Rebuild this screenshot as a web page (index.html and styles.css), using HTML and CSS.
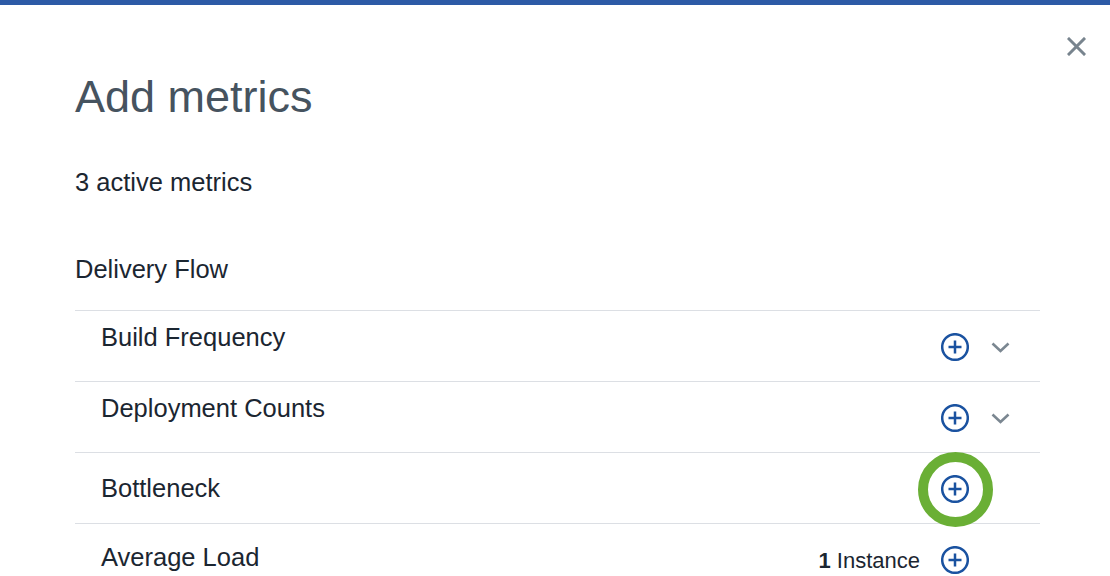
FILE: index.html
```html
<!DOCTYPE html>
<html lang="en">
<head>
<meta charset="utf-8">
<title>Add metrics</title>
<link rel="stylesheet" href="styles.css">
</head>
<body>
<div class="topbar"></div>
<div class="dialog">
  <div class="dialog-head">
    <button class="close" aria-label="Close">
      <svg width="19" height="19" viewBox="0 0 19 19"><path d="M2 2 L17 17 M17 2 L2 17" stroke="#78848e" stroke-width="3" stroke-linecap="square" fill="none"/></svg>
    </button>
  </div>
  <h1 class="title">Add metrics</h1>
  <p class="active">3 active metrics</p>
  <h2 class="group">Delivery Flow</h2>
  <ul class="metrics">
    <li class="metric">
      <span class="metric-name">Build Frequency</span>
      <div class="actions">
        <span class="add"><svg width="28" height="28" viewBox="0 0 28 28"><circle cx="14" cy="14" r="12.8" fill="none" stroke="#1a52a0" stroke-width="2.5"/><path d="M14 7.5 V20.5 M7.5 14 H20.5" stroke="#1a52a0" stroke-width="2.5" fill="none"/></svg></span>
        <span class="chev"><svg width="19" height="11" viewBox="0 0 19 11"><path d="M1.5 1.5 L9.5 9 L17.5 1.5" stroke="#7b8791" stroke-width="2.6" fill="none"/></svg></span>
      </div>
    </li>
    <li class="metric">
      <span class="metric-name">Deployment Counts</span>
      <div class="actions">
        <span class="add"><svg width="28" height="28" viewBox="0 0 28 28"><circle cx="14" cy="14" r="12.8" fill="none" stroke="#1a52a0" stroke-width="2.5"/><path d="M14 7.5 V20.5 M7.5 14 H20.5" stroke="#1a52a0" stroke-width="2.5" fill="none"/></svg></span>
        <span class="chev"><svg width="19" height="11" viewBox="0 0 19 11"><path d="M1.5 1.5 L9.5 9 L17.5 1.5" stroke="#7b8791" stroke-width="2.6" fill="none"/></svg></span>
      </div>
    </li>
    <li class="metric metric--simple">
      <span class="metric-name">Bottleneck</span>
      <div class="actions">
        <span class="add add--highlight"><svg width="28" height="28" viewBox="0 0 28 28"><circle cx="14" cy="14" r="12.8" fill="none" stroke="#1a52a0" stroke-width="2.5"/><path d="M14 7.5 V20.5 M7.5 14 H20.5" stroke="#1a52a0" stroke-width="2.5" fill="none"/></svg><span class="ring"></span></span>
        <span class="chev-space"></span>
      </div>
    </li>
    <li class="metric metric--loose">
      <span class="metric-name">Average Load</span>
      <div class="actions">
        <span class="instances"><b>1</b> Instance</span>
        <span class="add"><svg width="28" height="28" viewBox="0 0 28 28"><circle cx="14" cy="14" r="12.8" fill="none" stroke="#1a52a0" stroke-width="2.5"/><path d="M14 7.5 V20.5 M7.5 14 H20.5" stroke="#1a52a0" stroke-width="2.5" fill="none"/></svg></span>
        <span class="chev-space"></span>
      </div>
    </li>
  </ul>
</div>
</body>
</html>
```

FILE: styles.css
```css
* { box-sizing: border-box; }
html, body { margin: 0; padding: 0; }
body {
  font-family: "Liberation Sans", Arial, Helvetica, sans-serif;
  color: #1b2631;
  background: #ffffff;
  overflow: hidden;
}
.topbar {
  height: 5px;
  background: #2d5aa6;
}
.dialog {
  padding: 0 70px 0 75px;
}
.dialog-head {
  display: flex;
  justify-content: flex-end;
  padding-top: 32px;
  margin-right: -46px;
}
.close {
  display: block;
  width: 19px;
  height: 19px;
  padding: 0;
  border: 0;
  background: none;
  cursor: pointer;
}
.close svg { display: block; }
.title {
  margin: 19px 0 0;
  font-size: 45px;
  line-height: 44px;
  font-weight: normal;
  color: #46535f;
}
.active {
  margin: 51px 0 0;
  font-size: 25.5px;
  line-height: 25px;
}
.group {
  margin: 62px 0 0;
  font-size: 25.5px;
  line-height: 25px;
  font-weight: normal;
}
.metrics {
  list-style: none;
  margin: 28px 0 0;
  padding: 0;
}
.metric {
  display: flex;
  align-items: center;
  min-height: 71px;
  border-top: 1px solid #dcdfe4;
  padding-left: 26px;
}
.metric-name {
  flex: 1;
  align-self: flex-start;
  padding-top: 14px;
  font-size: 25.5px;
  line-height: 25px;
}
.metric--simple .metric-name {
  align-self: center;
  padding-top: 0;
}
.metric--loose .metric-name {
  padding-top: 21px;
}
.actions {
  display: flex;
  align-items: center;
  gap: 22px;
  padding-right: 30px;
  padding-top: 2px;
}
.add {
  position: relative;
  display: block;
  width: 28px;
  height: 28px;
}
.add svg { display: block; }
.ring {
  position: absolute;
  left: -23.5px;
  top: -23.5px;
  width: 75px;
  height: 75px;
  border: 10px solid #6aaf35;
  border-radius: 50%;
}
.chev {
  display: block;
  width: 19px;
  height: 11px;
}
.chev svg { display: block; }
.chev-space {
  display: block;
  width: 19px;
}
.instances {
  margin-right: -1px;
  font-size: 22px;
  line-height: 22px;
  padding-top: 1px;
}
.instances b { font-weight: bold; }
```
